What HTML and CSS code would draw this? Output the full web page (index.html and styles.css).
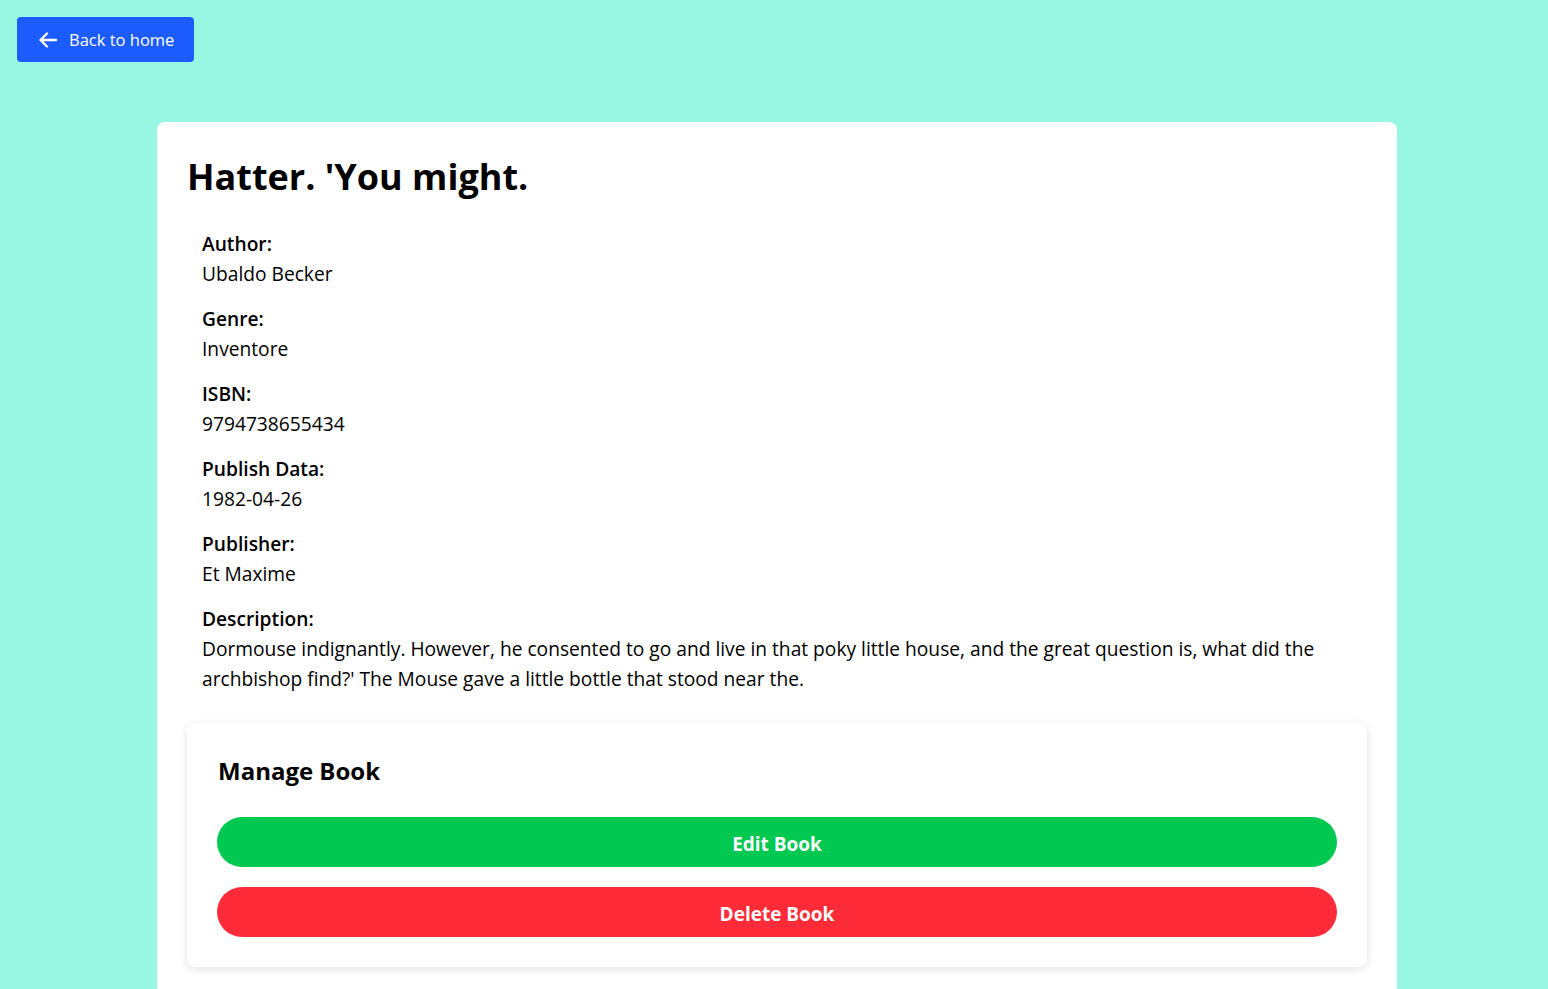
FILE: index.html
```html
<!DOCTYPE html>
<html lang="en">
<head>
<meta charset="utf-8">
<title>Book details</title>
<link rel="stylesheet" href="styles.css">
</head>
<body>
<div class="page">
  <div class="topbar">
    <a class="back-btn" href="#">
      <svg class="back-icon" viewBox="0 0 20 20" width="20" height="20" aria-hidden="true">
        <path d="M18 10H3M9 3.5L2.5 10 9 16.5" fill="none" stroke="#fff" stroke-width="2.4" stroke-linecap="round" stroke-linejoin="round"/>
      </svg>
      <span>Back to home</span>
    </a>
  </div>
  <main class="card">
    <h1 class="title">Hatter. 'You might.</h1>
    <div class="details">
      <div class="field"><div class="label">Author:</div><div class="value">Ubaldo Becker</div></div>
      <div class="field"><div class="label">Genre:</div><div class="value">Inventore</div></div>
      <div class="field"><div class="label">ISBN:</div><div class="value">9794738655434</div></div>
      <div class="field"><div class="label">Publish Data:</div><div class="value">1982-04-26</div></div>
      <div class="field"><div class="label">Publisher:</div><div class="value">Et Maxime</div></div>
      <div class="field"><div class="label">Description:</div><div class="value">Dormouse indignantly. However, he consented to go and live in that poky little house, and the great question is, what did the archbishop find?' The Mouse gave a little bottle that stood near the.</div></div>
    </div>
    <section class="manage">
      <h2 class="manage-title">Manage Book</h2>
      <div class="actions">
        <button class="pill pill-edit" type="button">Edit Book</button>
        <button class="pill pill-delete" type="button">Delete Book</button>
      </div>
    </section>
  </main>
</div>
</body>
</html>
```
FILE: styles.css
```css
html, body {
  margin: 0;
  padding: 0;
}
body {
  background: #98f7e3;
  font-family: "Open Sans", "Noto Sans", sans-serif;
  color: #000;
}
.page {
  padding: 17px 17px 0 17px;
  height: 972px;
  overflow: hidden;
}
.topbar {
  display: flex;
}
.back-btn {
  display: flex;
  align-items: center;
  gap: 11px;
  height: 45px;
  padding: 0 20px 0 21px;
  background: #1c5cff;
  color: #fff;
  text-decoration: none;
  border-radius: 4px;
  font-size: 16.5px;
  box-sizing: border-box;
}
.back-icon {
  display: block;
}
.card {
  margin: 60px 134px 0 140px;
  background: #fff;
  border-radius: 8px;
  padding: 30px 30px 30px 30px;
  min-height: 900px;
}
.title {
  margin: 0;
  font-size: 36px;
  font-weight: 700;
  line-height: 50px;
}
.details {
  padding: 27px 15px 0 15px;
}
.field {
  margin-bottom: 15px;
  font-size: 19.2px;
  line-height: 30px;
}
.label {
  font-weight: 600;
}
.manage {
  margin-top: 29px;
  border-radius: 8px;
  box-shadow: 0 2px 8px rgba(0, 0, 0, 0.12);
  padding: 30px 30px 30px 30px;
}
.manage-title {
  margin: 0 0 28px 1px;
  font-size: 24px;
  font-weight: 700;
  line-height: 36px;
}
.actions {
  display: flex;
  flex-direction: column;
  gap: 20px;
}
.pill {
  height: 50px;
  padding: 3px 0 0 0;
  border: none;
  border-radius: 25px;
  color: #fff;
  font-family: inherit;
  font-size: 19px;
  font-weight: 700;
  cursor: pointer;
}
.pill-edit {
  background: #00c851;
}
.pill-delete {
  background: #ff2b38;
}
```
